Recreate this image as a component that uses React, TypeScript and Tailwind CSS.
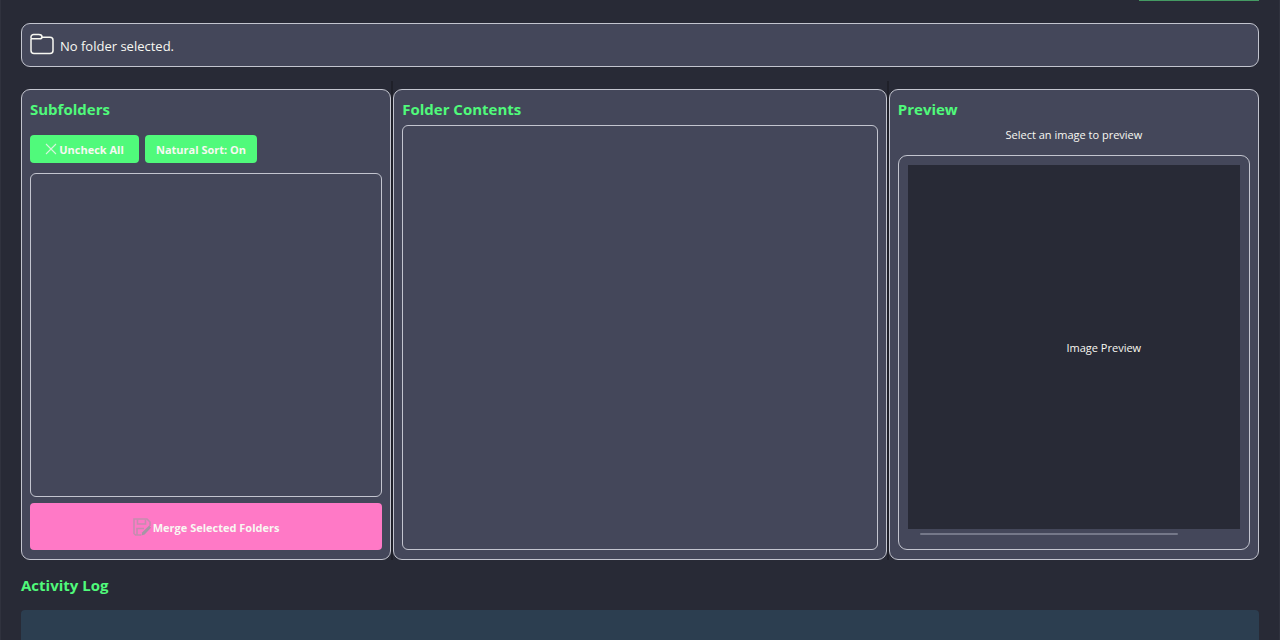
import React from 'react';

interface PanelProps {
  title: string;
  children: React.ReactNode;
}

function FolderIcon() {
  return (
    <svg className="w-6 h-6 text-[#f8f8f2]" viewBox="0 0 24 24" fill="none" stroke="currentColor" strokeWidth="1.5">
      <path d="M1 6V17.500a3 3 0 0 0 3 3h16a3 3 0 0 0 3-3V7.200a3 3 0 0 0-3-3h-8" />
      <path d="M1 5.800V4a2.600 2.600 0 0 1 2.600-2.600h5.200c1.700 0 3.200 1 3.200 2.500 0 1.200-1 1.900-2.400 1.900H1" />
    </svg>
  );
}

function CrossIcon() {
  return (
    <svg className="w-3 h-3" viewBox="0 0 12 12" fill="none" stroke="#d5f5dd" strokeWidth="1.1">
      <path d="M1 1l10 10M11 1L1 11" />
    </svg>
  );
}

function SaveEditIcon() {
  return (
    <svg className="w-[18px] h-[18px]" viewBox="0 0 18 18" fill="none" stroke="#c58daf" strokeWidth="1.600">
      <path d="M8 17H2.500L1 15.500V1h13l3 3v4" />
      <path d="M4.500 1.500v4.500h8v-4.500M4 17v-6.500h7" />
      <path d="M16.200 7.600l1.800 2.200-6.400 6.600-3.200 1.200.9-3.400z" fill="#a795a5" stroke="none" />
    </svg>
  );
}

function Panel({ title, children }: PanelProps) {
  return (
    <section className="flex flex-col min-w-0 px-2 pt-2 pb-[9px] bg-[#44475a] border border-[#c3c5cf] rounded-[9px]">
      <h2 className="text-[15px] leading-[22px] font-bold text-[#50fa7b]">{title}</h2>
      {children}
    </section>
  );
}

// Drag handle between two panels
function Splitter() {
  return <div className="-mt-2 bg-[#1f2029]" />;
}

export default function App() {
  return (
    <div className="flex flex-col h-screen overflow-hidden bg-[#282a36] border-x border-[#30323e] px-5 text-[#f8f8f2] font-['Open_Sans','Noto_Sans',sans-serif]">
      {/* Bottom edge of the toolbar button */}
      <header className="flex justify-end">
        <div className="w-[120px] h-px bg-[#459a63]" />
      </header>

      {/* Selected folder */}
      <div className="flex items-center gap-[6px] h-11 mt-[22px] px-2 shrink-0 bg-[#44475a] border border-[#c3c5cf] rounded-[9px]">
        <FolderIcon />
        <span className="pt-[2px] text-[13px] leading-5">No folder selected.</span>
      </div>

      {/* Panels */}
      <main className="grid grid-cols-[3fr_2px_4fr_2px_3fr] flex-1 min-h-0 mt-[22px]">
        <Panel title="Subfolders">
          <div className="flex gap-[6px] mt-[15px] text-[11px] leading-4 font-bold">
            <button className="flex items-center justify-center gap-[2px] w-[109px] h-7 rounded bg-[#50fa7b]">
              <CrossIcon />
              <span className="pt-[2px]">Uncheck All</span>
            </button>
            <button className="w-28 h-7 pt-[2px] rounded bg-[#50fa7b]">Natural Sort: On</button>
          </div>
          <div className="flex-1 mt-[10px] border border-[#c3c5cf] rounded-[6px]" />
          <button className="flex items-center justify-center gap-[2px] h-[47px] mt-[6px] rounded bg-[#ff79c6] text-[11px] leading-4 font-bold">
            <SaveEditIcon />
            <span className="pt-[2px]">Merge Selected Folders</span>
          </button>
        </Panel>

        <Splitter />

        <Panel title="Folder Contents">
          <div className="flex-1 mt-[5px] border border-[#c3c5cf] rounded-[6px]" />
        </Panel>

        <Splitter />

        <Panel title="Preview">
          <p className="mt-[3px] text-[11px] leading-6 text-center">Select an image to preview</p>
          <div className="flex flex-col flex-1 min-h-0 mt-2 px-[9px] pt-[9px] pb-[14px] border border-[#c3c5cf] rounded-[9px]">
            <div className="flex flex-1 overflow-hidden bg-[#282a36]">
              <div className="flex items-center justify-center w-[392px] pt-[2px] shrink-0 text-[11px] leading-4">
                Image Preview
              </div>
            </div>
            <div className="w-[258px] h-[2px] mt-1 ml-3 rounded-full bg-[#757889]" />
          </div>
        </Panel>
      </main>

      {/* Activity log */}
      <section className="flex flex-col shrink-0 mt-[14px]">
        <h2 className="text-[15px] leading-[22px] font-bold text-[#50fa7b]">Activity Log</h2>
        <div className="h-[30px] mt-[14px] rounded-t bg-[#2c3e50]" />
      </section>
    </div>
  );
}
